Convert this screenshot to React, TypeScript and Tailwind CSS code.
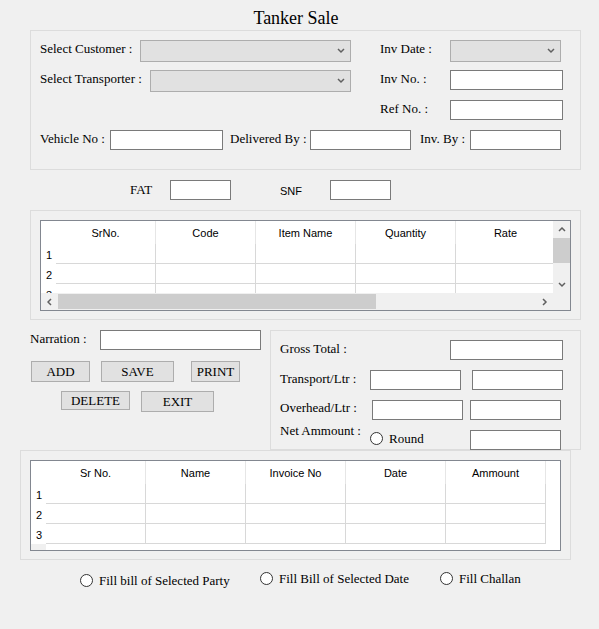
import React from 'react';

const gridOneCols = ['SrNo.', 'Code', 'Item Name', 'Quantity', 'Rate'];
const gridTwoCols = ['Sr No.', 'Name', 'Invoice No', 'Date', 'Ammount'];

function Chevron({ dir = 'down' }: { dir?: 'down' | 'up' | 'left' | 'right' }) {
  const pts: Record<string, string> = {
    down: '1,1 4,4 7,1',
    up: '1,4 4,1 7,4',
    left: '4,1 1,4 4,7',
    right: '1,1 4,4 1,7',
  };
  const vertical = dir === 'down' || dir === 'up';
  return (
    <svg
      width={vertical ? 8 : 6}
      height={vertical ? 6 : 8}
      viewBox={vertical ? '0 0 8 6' : '0 0 6 8'}
      className="block"
    >
      <polyline points={pts[dir]} fill="none" stroke="#606060" strokeWidth="1.5" />
    </svg>
  );
}

function Combo({ className }: { className: string }) {
  return (
    <div
      className={`h-[22px] shrink-0 bg-[#e1e1e1] border border-[#adadad] flex items-center justify-end pr-[5px] ${className}`}
    >
      <Chevron />
    </div>
  );
}

function TextBox({ className }: { className: string }) {
  return <div className={`h-[20px] shrink-0 bg-white border border-[#7a7a7a] ${className}`} />;
}

function Label({ children, className = '' }: { children: React.ReactNode; className?: string }) {
  return <div className={`shrink-0 pt-px leading-[15px] whitespace-nowrap ${className}`}>{children}</div>;
}

function Button({ children, className }: { children: React.ReactNode; className: string }) {
  return (
    <div
      className={`shrink-0 bg-[#e1e1e1] border border-[#adadad] flex items-center justify-center leading-[15px] ${className}`}
    >
      {children}
    </div>
  );
}

function Radio({ className = '' }: { className?: string }) {
  return (
    <div className={`w-[13px] h-[13px] shrink-0 rounded-full border border-[#333333] bg-white ${className}`} />
  );
}

function Grid({ cols, scroll }: { cols: string[]; scroll?: boolean }) {
  const rows = ['1', '2', '3'];
  const table = (
    <div className="flex-1 overflow-hidden bg-white font-['Liberation_Sans',sans-serif] text-[11px]">
      {/* header */}
      <div className="flex h-[23px]">
        <div className="w-[15px] shrink-0" />
        {cols.map((c) => (
          <div
            key={c}
            className="w-[100px] shrink-0 border-r border-[#e6e6e6] text-center leading-[13px] pt-[6px]"
          >
            {c}
          </div>
        ))}
      </div>
      {rows.map((r) => (
        <div key={r} className="flex h-[20px]">
          <div className="w-[15px] shrink-0 pl-[5px] pt-[5px] leading-[13px]">{r}</div>
          {cols.map((c) => (
            <div key={c} className="w-[100px] shrink-0 border-r border-b border-[#d8d8d8]" />
          ))}
        </div>
      ))}
      {!scroll && <div className="w-[15px] h-[6px] bg-[#f0f0f0]" />}
    </div>
  );

  return (
    <div className="w-[531px] h-[91px] border border-[#828790] bg-white flex flex-col">
      {scroll ? (
        <>
          <div className="flex h-[72px]">
            {table}
            <div className="w-[17px] shrink-0 bg-[#f0f0f0] flex flex-col items-center">
              <div className="h-[17px] flex items-center">
                <Chevron dir="up" />
              </div>
              <div className="w-full h-[25px] bg-[#cdcdcd] pl-[1px]" />
              <div className="flex-1" />
              <div className="h-[17px] flex items-center">
                <Chevron dir="down" />
              </div>
            </div>
          </div>
          <div className="flex h-[17px] bg-[#f0f0f0]">
            <div className="w-[17px] flex items-center justify-center">
              <Chevron dir="left" />
            </div>
            <div className="w-[318px] h-[15px] mt-px bg-[#cdcdcd]" />
            <div className="flex-1" />
            <div className="w-[17px] flex items-center justify-center">
              <Chevron dir="right" />
            </div>
            <div className="w-[17px]" />
          </div>
        </>
      ) : (
        <div className="flex h-full">{table}</div>
      )}
    </div>
  );
}

export default function App() {
  return (
    <div className="w-[599px] h-[629px] overflow-hidden bg-[#f0f0f0] text-black text-[13px] font-['Liberation_Serif',serif]">
      <div className="h-[30px] pt-[7px] pr-[7px] text-center text-[18px] leading-[22px]">Tanker Sale</div>

      {/* header details */}
      <div className="ml-[30px] w-[551px] h-[140px] border border-[#dcdcdc] pt-[9px] pl-[9px]">
        <div className="flex h-[22px]">
          <Label className="w-[100px]">Select Customer :</Label>
          <Combo className="w-[211px]" />
          <Label className="ml-[29px] w-[70px]">Inv Date :</Label>
          <Combo className="w-[111px]" />
        </div>
        <div className="flex h-[22px] mt-[8px]">
          <Label className="w-[110px]">Select Transporter :</Label>
          <Combo className="w-[201px]" />
          <Label className="ml-[29px] w-[70px]">Inv No. :</Label>
          <TextBox className="w-[113px]" />
        </div>
        <div className="flex h-[20px] mt-[8px]">
          <Label className="ml-[340px] w-[70px]">Ref No. :</Label>
          <TextBox className="w-[113px]" />
        </div>
        <div className="flex h-[20px] mt-[10px]">
          <Label className="w-[70px]">Vehicle No :</Label>
          <TextBox className="w-[113px]" />
          <Label className="ml-[7px] w-[80px]">Delivered By :</Label>
          <TextBox className="w-[101px]" />
          <Label className="ml-[9px] w-[50px]">Inv. By :</Label>
          <TextBox className="w-[91px]" />
        </div>
      </div>

      <div className="flex h-[20px] mt-[10px] pl-[130px]">
        <Label className="w-[40px] !pt-[2px]">FAT</Label>
        <TextBox className="w-[61px]" />
        <div className="ml-[49px] w-[50px] pt-[5px] leading-[13px] text-[11px] font-['Liberation_Sans',sans-serif]">
          SNF
        </div>
        <TextBox className="w-[61px]" />
      </div>

      {/* item grid */}
      <div className="mt-[10px] ml-[30px] w-[551px] h-[110px] border border-[#dcdcdc] pt-[9px] pl-[9px]">
        <Grid cols={gridOneCols} scroll />
      </div>

      <div className="flex mt-[10px] h-[120px]">
        <div className="w-[270px] shrink-0">
          <div className="flex h-[20px] pl-[30px]">
            <Label className="w-[70px]">Narration :</Label>
            <TextBox className="w-[161px]" />
          </div>
          <div className="flex mt-[11px] h-[21px]">
            <Button className="ml-[31px] w-[59px] h-[21px]">ADD</Button>
            <Button className="ml-[11px] w-[73px] h-[21px]">SAVE</Button>
            <Button className="ml-[17px] w-[49px] h-[21px]">PRINT</Button>
          </div>
          <div className="flex items-start mt-[9px]">
            <Button className="ml-[61px] w-[69px] h-[19px]">DELETE</Button>
            <Button className="ml-[11px] w-[73px] h-[21px]">EXIT</Button>
          </div>
        </div>

        {/* totals */}
        <div className="w-[311px] h-[120px] shrink-0 border border-[#dcdcdc] pl-[9px] pt-[9px]">
          <div className="flex h-[20px]">
            <Label className="w-[170px]">Gross Total :</Label>
            <TextBox className="w-[113px]" />
          </div>
          <div className="flex h-[20px] mt-[10px]">
            <Label className="w-[90px]">Transport/Ltr :</Label>
            <TextBox className="w-[91px]" />
            <TextBox className="ml-[11px] w-[91px]" />
          </div>
          <div className="flex items-start h-[20px] mt-[10px]">
            <Label className="w-[92px] -mt-px">Overhead/Ltr :</Label>
            <TextBox className="w-[91px]" />
            <TextBox className="ml-[7px] w-[91px]" />
          </div>
          <div className="flex items-start h-[20px] mt-[10px]">
            <Label className="w-[90px] -mt-[8px]">Net Ammount :</Label>
            <div className="w-[100px] shrink-0 flex items-start">
              <Radio className="mt-[2px]" />
              <Label className="ml-[6px]">Round</Label>
            </div>
            <TextBox className="w-[91px]" />
          </div>
        </div>
      </div>

      {/* bills grid */}
      <div className="ml-[20px] w-[551px] h-[110px] border border-[#dcdcdc] pt-[9px] pl-[9px]">
        <Grid cols={gridTwoCols} />
      </div>

      <div className="flex items-start mt-[10px] pl-[80px]">
        <div className="w-[180px] flex items-start pt-[2px]">
          <Radio className="mt-[2px]" />
          <Label className="ml-[6px]">Fill bill of Selected Party</Label>
        </div>
        <div className="w-[180px] flex items-start">
          <Radio className="mt-[2px]" />
          <Label className="ml-[6px]">Fill Bill of Selected Date</Label>
        </div>
        <div className="flex items-start">
          <Radio className="mt-[2px]" />
          <Label className="ml-[6px]">Fill Challan</Label>
        </div>
      </div>
    </div>
  );
}
